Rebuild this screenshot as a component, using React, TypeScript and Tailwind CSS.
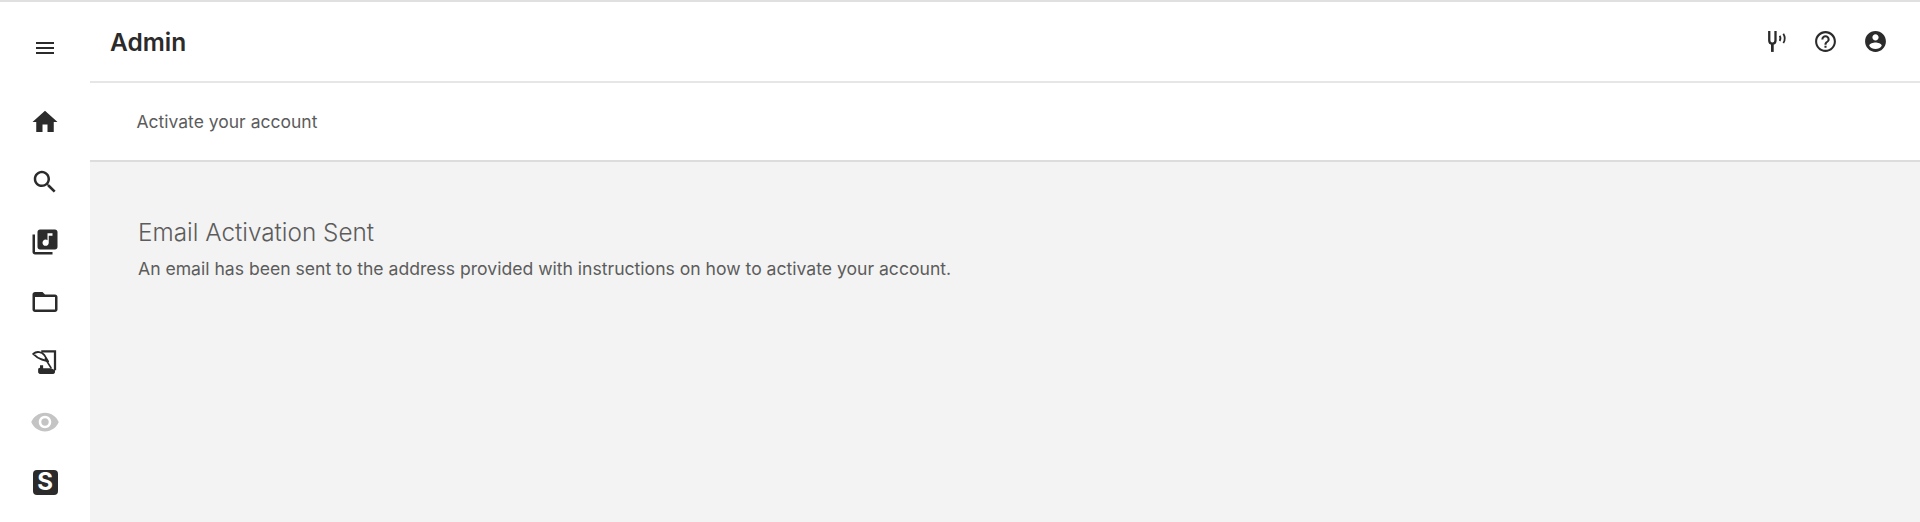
import type { ReactNode } from 'react';

const ICONS = {
  menu: 'M3 18h18v-2H3v2zm0-5h18v-2H3v2zm0-7v2h18V6H3z',
  home: 'M10 20v-6h4v6h5v-8h3L12 3 2 12h3v8z',
  search:
    'M15.5 14h-.79l-.28-.27C15.41 12.59 16 11.11 16 9.5 16 5.91 13.09 3 9.5 3S3 5.91 3 9.5 5.91 16 9.5 16c1.61 0 3.09-.59 4.23-1.57l.27.28v.79l5 4.99L20.49 19l-4.99-5zm-6 0C7.01 14 5 11.99 5 9.5S7.01 5 9.5 5 14 7.01 14 9.5 11.99 14 9.5 14z',
  music:
    'M20 2H8c-1.1 0-2 .9-2 2v12c0 1.1.9 2 2 2h12c1.1 0 2-.9 2-2V4c0-1.1-.9-2-2-2zm-2 5h-3v5.5c0 1.38-1.12 2.5-2.5 2.5S10 13.88 10 12.5s1.12-2.5 2.5-2.5c.57 0 1.08.19 1.5.51V5h4v2zM4 6H2v14c0 1.1.9 2 2 2h14v-2H4V6z',
  folder:
    'M20 6h-8l-2-2H4c-1.1 0-2 .9-2 2v12c0 1.1.9 2 2 2h16c1.1 0 2-.9 2-2V8c0-1.1-.9-2-2-2zm0 12H4V8h16v10z',
  eye: 'M12 4.5C7 4.5 2.73 7.61 1 12c1.73 4.39 6 7.5 11 7.5s9.27-3.11 11-7.5c-1.73-4.39-6-7.5-11-7.5zM12 17c-2.76 0-5-2.24-5-5s2.24-5 5-5 5 2.24 5 5-2.24 5-5 5zm0-8c-1.66 0-3 1.34-3 3s1.34 3 3 3 3-1.34 3-3-1.34-3-3-3z',
  help:
    'M11 18h2v-2h-2v2zm1-16C6.48 2 2 6.48 2 12s4.48 10 10 10 10-4.48 10-10S17.52 2 12 2zm0 18c-4.41 0-8-3.59-8-8s3.59-8 8-8 8 3.59 8 8-3.59 8-8 8zm0-14c-2.21 0-4 1.79-4 4h2c0-1.1.9-2 2-2s2 .9 2 2c0 2-3 1.75-3 5h2c0-2.25 3-2.5 3-5 0-2.21-1.79-4-4-4z',
  account:
    'M12 2C6.48 2 2 6.48 2 12s4.48 10 10 10 10-4.48 10-10S17.52 2 12 2zm0 3c1.66 0 3 1.34 3 3s-1.34 3-3 3-3-1.34-3-3 1.34-3 3-3zm0 14.2c-2.5 0-4.71-1.28-6-3.22.03-1.99 4-3.08 6-3.08 1.99 0 5.97 1.09 6 3.08-1.29 1.94-3.5 3.22-6 3.22z',
};

function Icon({ d, className = 'h-[30px] w-[30px] fill-[#2b2b2b]' }: { d: string; className?: string }) {
  return (
    <svg viewBox="0 0 24 24" className={className}>
      <path d={d} />
    </svg>
  );
}

function QuillIcon() {
  return (
    <svg viewBox="0 0 24 24" className="h-[30px] w-[30px]" fill="none" stroke="#2b2b2b">
      <path d="M9 3.5h11v15" strokeWidth="1.8" />
      <path d="M2.5 5.5c3-2.5 7-1.5 9 1l3 5-5-1.5c-3-.8-5-2.5-7-4.5z" strokeWidth="1.5" strokeLinejoin="round" />
      <path d="M12 9l5 8" strokeWidth="1.2" />
      <path d="M8 14.5h2.5v2.5H17l3 1.5v1.5c0 .8-.6 1.5-1.5 1.5H8c-.8 0-1.5-.6-1.5-1.5v-2c0-.9.6-1.5 1.5-1.5z" fill="#2b2b2b" stroke="none" />
    </svg>
  );
}

function TuningForkIcon() {
  return (
    <svg viewBox="0 0 24 24" className="h-[25px] w-[25px]" fill="none" stroke="#2b2b2b">
      <path d="M6 2v9c0 2 1 3 3 3s3-1 3-3V2" strokeWidth="2.2" />
      <path d="M9 14v8" strokeWidth="2.6" />
      <path d="M16 6.5c1 1.6 1 3.4 0 5" strokeWidth="1.7" />
      <path d="M19.5 4.5c1.8 2.8 1.8 6.2 0 9" strokeWidth="1.7" />
    </svg>
  );
}

function SLogo() {
  return (
    <div className="flex h-[25px] w-[25px] items-center justify-center rounded-[4px] bg-[#2b2b2b] text-[24px] leading-none font-bold text-white">
      S
    </div>
  );
}

function NavItem({ children }: { children: ReactNode }) {
  return <div className="flex h-[60px] items-center justify-center">{children}</div>;
}

export default function App() {
  return (
    <div className="flex h-[522px] flex-col overflow-hidden bg-white font-['Inter',sans-serif]">
      <div className="h-0.5 shrink-0 bg-[#e0e0e0]" />
      <div className="flex min-h-0 flex-1">
        <nav className="flex w-[90px] shrink-0 flex-col pt-4">
          <div className="mb-[14px] flex h-[60px] items-center justify-center">
            <Icon d={ICONS.menu} className="h-6 w-6 fill-[#2b2b2b]" />
          </div>
          <NavItem><Icon d={ICONS.home} /></NavItem>
          <NavItem><Icon d={ICONS.search} /></NavItem>
          <NavItem><Icon d={ICONS.music} /></NavItem>
          <NavItem><Icon d={ICONS.folder} /></NavItem>
          <NavItem><QuillIcon /></NavItem>
          <NavItem><Icon d={ICONS.eye} className="h-[30px] w-[30px] fill-[#c4c4c4]" /></NavItem>
          <NavItem><SLogo /></NavItem>
        </nav>
        <div className="flex min-w-0 flex-1 flex-col">
          <header className="flex h-[81px] shrink-0 items-center justify-between border-b-2 border-[#e6e6e6] pr-[32px] pl-5">
            <h1 className="pt-0.5 text-[24.5px] font-semibold text-[#2b2b2b]">Admin</h1>
            <div className="flex items-center gap-[25px]">
              <TuningForkIcon />
              <Icon d={ICONS.help} className="h-[25px] w-[25px] fill-[#2b2b2b]" />
              <Icon d={ICONS.account} className="h-[25px] w-[25px] fill-[#2b2b2b]" />
            </div>
          </header>
          <div className="flex h-[79px] shrink-0 items-center border-b-2 border-[#dcdcdc] pt-0.5 pl-[46.5px] text-[17.5px] text-[#5c5c5c]">
            Activate your account
          </div>
          <main className="flex-1 bg-[#f3f3f3] px-[48px] pt-[54px] text-[#5c5c5c]">
            <h2 className="text-[24.3px] leading-8 font-light">Email Activation Sent</h2>
            <p className="mt-2 text-[17.58px]">
              An email has been sent to the address provided with instructions on how to activate your account.
            </p>
          </main>
        </div>
      </div>
    </div>
  );
}
